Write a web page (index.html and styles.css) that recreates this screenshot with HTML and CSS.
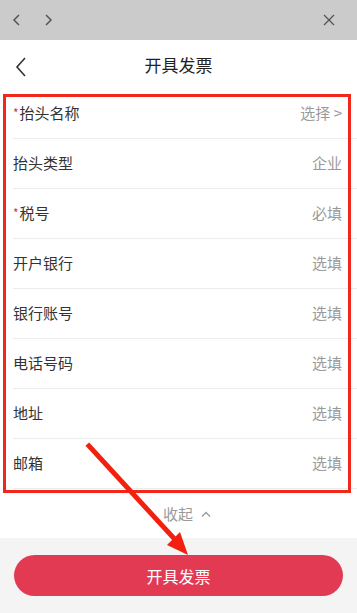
FILE: index.html
```html
<!DOCTYPE html>
<html lang="zh">
<head>
<meta charset="utf-8">
<link rel="stylesheet" href="styles.css">
</head>
<body>
<div class="page">
  <div class="topbar">
    <div class="nav-left">
      <svg class="tb-icon" viewBox="0 0 16 16"><path d="M10 3 L5 8 L10 13" fill="none" stroke="#555" stroke-width="1.5"/></svg>
      <svg class="tb-icon" viewBox="0 0 16 16"><path d="M6 3 L11 8 L6 13" fill="none" stroke="#555" stroke-width="1.5"/></svg>
    </div>
    <svg class="tb-icon" viewBox="0 0 16 16"><path d="M3 3 L13 13 M13 3 L3 13" fill="none" stroke="#555" stroke-width="1.3"/></svg>
  </div>
  <div class="header">
    <svg class="back" viewBox="0 0 14 22"><path d="M11 2 L3 11 L11 20" fill="none" stroke="#333" stroke-width="1.6"/></svg>
    <div class="title">开具发票</div>
  </div>
  <div class="form">
    <div class="row"><span class="label"><i class="req">*</i>抬头名称</span><span class="value">选择 &gt;</span></div>
    <div class="row"><span class="label">抬头类型</span><span class="value">企业</span></div>
    <div class="row"><span class="label"><i class="req">*</i>税号</span><span class="value">必填</span></div>
    <div class="row"><span class="label">开户银行</span><span class="value">选填</span></div>
    <div class="row"><span class="label">银行账号</span><span class="value">选填</span></div>
    <div class="row"><span class="label">电话号码</span><span class="value">选填</span></div>
    <div class="row"><span class="label">地址</span><span class="value">选填</span></div>
    <div class="row"><span class="label">邮箱</span><span class="value">选填</span></div>
  </div>
  <div class="collapse">收起<svg class="up" viewBox="0 0 12 8"><path d="M2 6.5 L6 2.5 L10 6.5" fill="none" stroke="#999" stroke-width="1.3"/></svg></div>
  <div class="footer">
    <div class="btn">开具发票</div>
  </div>
  <div class="highlight"></div>
  <svg class="arrow" viewBox="0 0 357 613" width="357" height="613">
    <line x1="89" y1="446" x2="181" y2="546" stroke="#f2210f" stroke-width="5" stroke-linecap="square"/>
    <polygon points="188,555 167,545 180,532" fill="#f2210f"/>
  </svg>
</div>
</body>
</html>
```
FILE: styles.css
```css
* { box-sizing: border-box; margin: 0; padding: 0; }
html, body { width: 357px; height: 613px; overflow: hidden; background: #fff; }
body { font-family: "Noto Sans CJK SC", "Noto Sans", sans-serif; color: #333; }
.page { position: relative; width: 357px; height: 613px; display: flex; flex-direction: column; }
.topbar { height: 40px; background: #cbcbcb; display: flex; align-items: center; justify-content: space-between; padding: 0 20px 0 9px; }
.nav-left { display: flex; gap: 15px; }
.tb-icon { width: 16px; height: 16px; display: block; }
.header { height: 49px; display: flex; align-items: center; justify-content: center; position: relative; }
.back { position: absolute; left: 14px; top: 16px; width: 14px; height: 22px; }
.title { font-size: 17px; color: #222; line-height: 1; margin-top: 0; }
.form { display: flex; flex-direction: column; padding-left: 13px; }
.row { height: 50px; display: flex; align-items: center; justify-content: space-between; padding-right: 15px; border-bottom: 1px solid #ececec; font-size: 15px; }
.label { color: #333; display: flex; align-items: center; margin-top: -2px; }
.value { color: #9a9a9a; margin-top: -2px; }
.req { font-style: normal; color: #d6334a; font-size: 12px; margin-right: 1px; }
.collapse { height: 49px; display: flex; align-items: center; justify-content: center; gap: 7px; font-size: 15px; color: #9a9a9a; padding-left: 18px; }
.up { width: 12px; height: 8px; }
.footer { flex: 1; background: #f4f4f4; padding: 17px 14px 0 14px; }
.btn { height: 41px; border-radius: 21px; background: #e23a52; color: #fff; font-size: 16px; display: flex; align-items: center; justify-content: center; }
.highlight { position: absolute; left: 3px; top: 94px; width: 348px; height: 399px; border: 3px solid #f0271a; }
.arrow { position: absolute; left: 0; top: 0; pointer-events: none; }
```
